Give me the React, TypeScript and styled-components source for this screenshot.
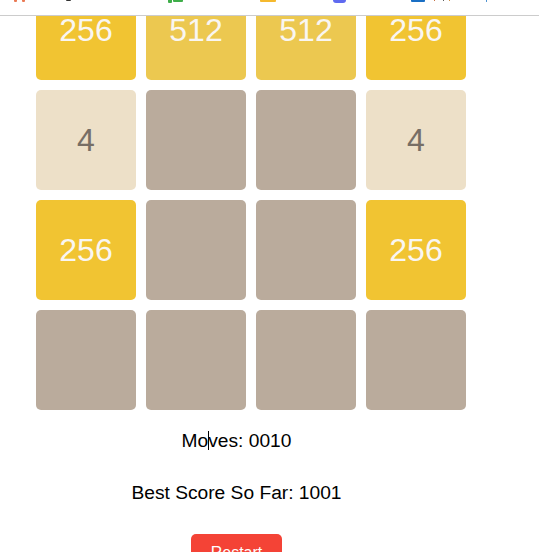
import styled, { createGlobalStyle } from 'styled-components';

const GlobalStyle = createGlobalStyle`
  html, body {
    margin: 0;
    height: 100%;
    background: #fff;
    overflow: hidden;
    font-family: "Liberation Sans", Arial, sans-serif;
  }
`;

type Mark = { gap: number; w: number; h: number; color: string; round?: boolean };

// what is left of the bookmark favicons above the fold
const marks: Mark[] = [
  { gap: 14, w: 3, h: 2, color: '#ea7a55' },
  { gap: 5, w: 3, h: 2, color: '#ea7a55' },
  { gap: 41, w: 5, h: 1, color: '#333333' },
  { gap: 97, w: 4, h: 3, color: '#3fae4a' },
  { gap: 1, w: 10, h: 2, color: '#3fae4a' },
  { gap: 77, w: 16, h: 2, color: '#f5b92e' },
  { gap: 57, w: 13, h: 3, color: '#5f6af0', round: true },
  { gap: 65, w: 14, h: 2, color: '#1a6fc4' },
  { gap: 9, w: 1, h: 1, color: '#c46a3a' },
  { gap: 8, w: 1, h: 1, color: '#555555' },
  { gap: 5, w: 1, h: 1, color: '#d08a3a' },
  { gap: 36, w: 1, h: 2, color: '#4a90d0' },
];

const rows = [
  [256, 512, 512, 256],
  [4, 0, 0, 4],
  [256, 0, 0, 256],
  [0, 0, 0, 0],
];

export default function App() {
  return (
    <Page>
      <GlobalStyle />
      <BookmarkBar>
        {marks.map((m, i) => (
          <FaviconSlice key={i} $gap={m.gap} $w={m.w} $h={m.h} $color={m.color} $round={m.round} />
        ))}
      </BookmarkBar>
      <Game>
        <Board>
          {rows.flat().map((value, i) => (
            <Tile key={i} $value={value}>
              {value || ''}
            </Tile>
          ))}
        </Board>
        <Moves>
          Moves: 0010
          <Caret />
        </Moves>
        <BestScore>Best Score So Far: 1001</BestScore>
        <RestartButton>Restart</RestartButton>
      </Game>
    </Page>
  );
}

const tileColors: Record<number, string> = {
  0: '#baab9c',
  4: '#ede0c8',
  256: '#f1c432',
  512: '#ecc850',
};

const Page = styled.div`
  height: 552px;
  overflow: hidden;
`;

const BookmarkBar = styled.div`
  position: relative;
  z-index: 1;
  display: flex;
  align-items: flex-start;
  height: 15px;
  background: #fff;
  border-bottom: 1px solid #cccccc;
`;

const FaviconSlice = styled.span<{ $gap: number; $w: number; $h: number; $color: string; $round?: boolean }>`
  margin-left: ${(p) => p.$gap}px;
  width: ${(p) => p.$w}px;
  height: ${(p) => p.$h}px;
  background: ${(p) => p.$color};
  border-radius: ${(p) => (p.$round ? '0 0 7px 7px' : '0 0 1px 1px')};
`;

const Game = styled.main`
  width: 473px;
  margin-top: -36px;
  display: flex;
  flex-direction: column;
  align-items: center;
`;

const Board = styled.div`
  align-self: flex-start;
  margin-left: 36px;
  display: grid;
  grid-template-columns: repeat(4, 100px);
  grid-auto-rows: 100px;
  gap: 10px;
`;

const Tile = styled.div<{ $value: number }>`
  display: flex;
  align-items: center;
  justify-content: center;
  border-radius: 5px;
  font-size: 32px;
  background: ${(p) => tileColors[p.$value]};
  color: ${(p) => (p.$value === 4 ? '#776e65' : '#f9f6f2')};
`;

const Moves = styled.p`
  position: relative;
  margin: 20px 0 0;
  font-size: 19.2px;
  color: #000;
`;

const Caret = styled.span`
  position: absolute;
  left: 26px;
  top: 1px;
  width: 1px;
  height: 19px;
  background: #000;
`;

const BestScore = styled.p`
  margin: 30px 0 0;
  font-size: 19.2px;
  color: #000;
`;

const RestartButton = styled.button`
  margin-top: 30px;
  padding: 10px 20px;
  border: none;
  border-radius: 5px;
  background: #f44336;
  color: #fff;
  font-family: inherit;
  font-size: 16px;
`;
